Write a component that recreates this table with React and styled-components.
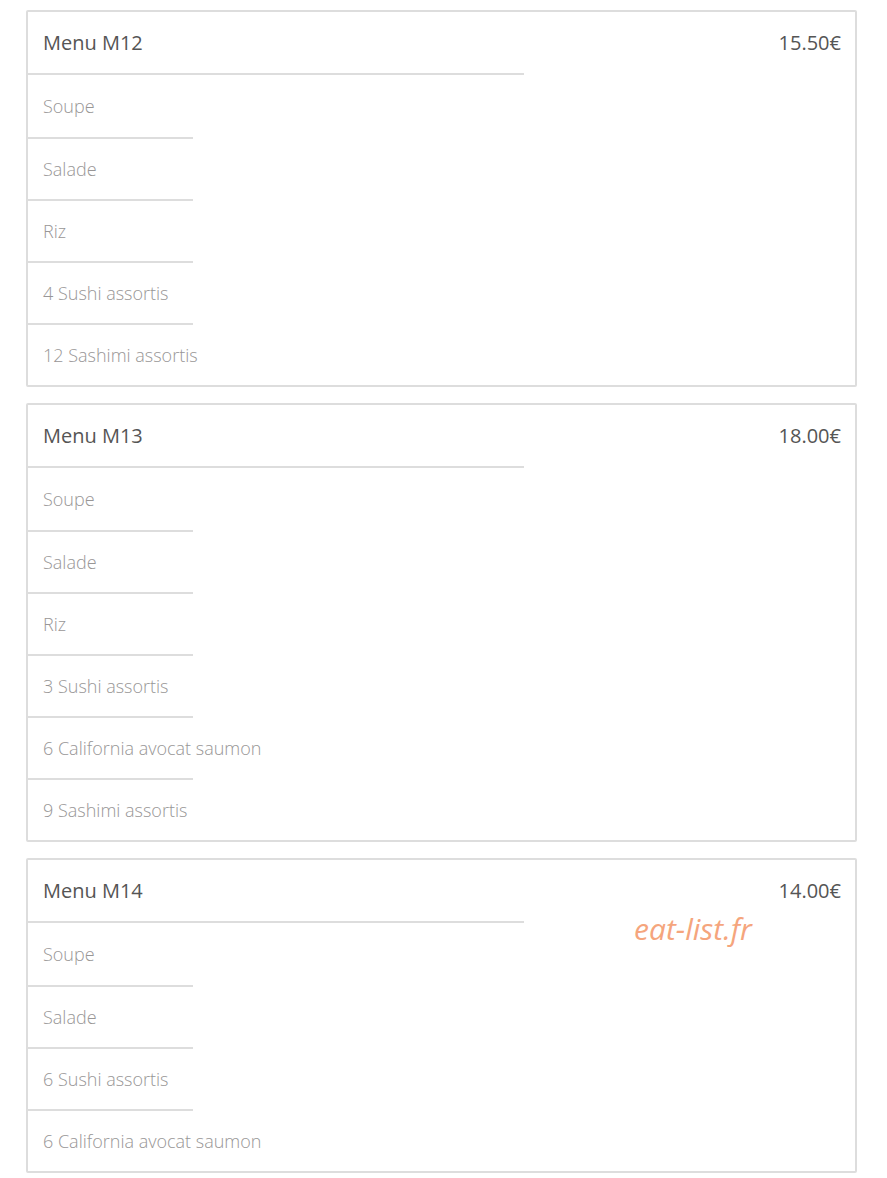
import React from "react";
import styled, { createGlobalStyle } from "styled-components";

const menus = [
  {
    name: "Menu M12",
    price: "15.50€",
    items: ["Soupe", "Salade", "Riz", "4 Sushi assortis", "12 Sashimi assortis"],
  },
  {
    name: "Menu M13",
    price: "18.00€",
    items: [
      "Soupe",
      "Salade",
      "Riz",
      "3 Sushi assortis",
      "6 California avocat saumon",
      "9 Sashimi assortis",
    ],
  },
  {
    name: "Menu M14",
    price: "14.00€",
    items: ["Soupe", "Salade", "6 Sushi assortis", "6 California avocat saumon"],
  },
];

const GlobalStyle = createGlobalStyle`
  body {
    margin: 0;
    background: #ffffff;
    font-family: "Open Sans", "Noto Sans", sans-serif;
  }
`;

const Page = styled.div`
  position: relative;
  width: 831px;
  padding: 10px 0 6px 26px;
  display: flex;
  flex-direction: column;
  gap: 16px;
`;

const Card = styled.div`
  border: 2px solid #dddddd;
  border-radius: 2px;
  display: flex;
  flex-direction: column;
`;

const Header = styled.div`
  height: 61px;
  display: flex;
  align-items: center;
  justify-content: space-between;
  padding: 0 14px 0 15px;
`;

const Title = styled.span`
  font-size: 20px;
  font-weight: 400;
  color: #555555;
`;

const Price = styled.span`
  font-size: 20px;
  font-weight: 400;
  color: #555555;
`;

const Rule = styled.div`
  height: 2px;
  background: #dddddd;
  width: ${(p) => p.$width};
`;

const Item = styled.div`
  height: ${(p) => (p.$first ? "62px" : "60px")};
  display: flex;
  align-items: center;
  padding: 0 15px;
  font-size: 18px;
  font-weight: 300;
  color: #989696;
`;

const Watermark = styled.span`
  position: absolute;
  left: 634px;
  top: 908px;
  font-size: 30px;
  font-style: italic;
  font-weight: 400;
  color: #f5a57d;
`;

const MenuCard = ({ menu }) => (
  <Card>
    <Header>
      <Title>{menu.name}</Title>
      <Price>{menu.price}</Price>
    </Header>
    <Rule $width="60%" />
    {menu.items.map((item, i) => (
      <React.Fragment key={item + i}>
        {i > 0 && <Rule $width="20%" />}
        <Item $first={i === 0}>{item}</Item>
      </React.Fragment>
    ))}
  </Card>
);

export default function App() {
  return (
    <>
      <GlobalStyle />
      <Page>
        {menus.map((m) => (
          <MenuCard key={m.name} menu={m} />
        ))}
        <Watermark>eat-list.fr</Watermark>
      </Page>
    </>
  );
}
